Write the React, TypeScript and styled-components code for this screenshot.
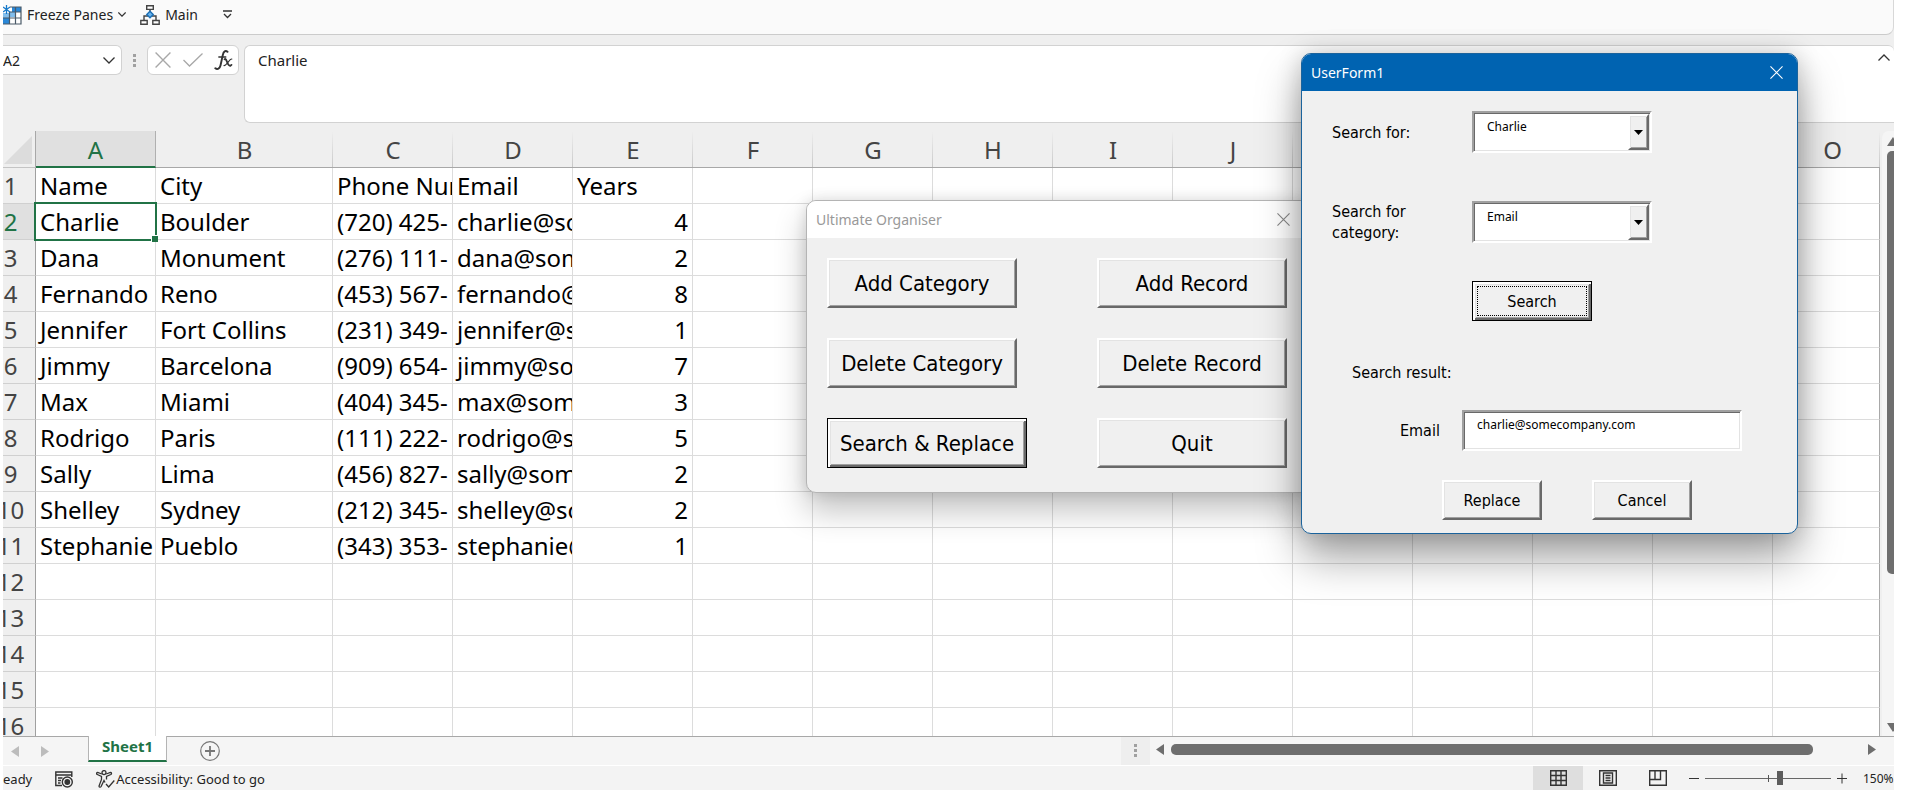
import React from "react";
import styled, { createGlobalStyle, css } from "styled-components";

const uiFont = `"Noto Sans", "Open Sans", sans-serif`;
const formFont = `"DejaVu Sans Condensed", "DejaVu Sans", sans-serif`;
const green = "#217346";

const GlobalStyle = createGlobalStyle`
  * { box-sizing: border-box; }
  body { margin: 0; background: #fff; font-family: ${uiFont}; color: #222; }
  button, input, select { font: inherit; color: inherit; margin: 0; }
`;

const Workbook = styled.main`
  position: relative;
  display: flex;
  flex-direction: column;
  height: 100vh;
  padding: 0 26px 6px 3px;
  overflow: hidden;
`;

/* Quick access bar */
const QuickBarTrack = styled.div`
  background: #efefef;
`;
const QuickBar = styled.header`
  display: flex;
  align-items: center;
  height: 35px;
  padding-bottom: 5px;
  border-bottom: 1px solid #cbcbcb;
  border-right: 1px solid #d8d8d8;
  border-radius: 0 0 8px 0;
  background: #fafafa;
`;
const QuickButton = styled.button`
  display: flex;
  align-items: center;
  gap: 5px;
  padding: 0;
  margin-right: 14px;
  border: 0;
  background: none;
  font-size: 14px;
  line-height: 20px;
`;

/* Formula bar */
const FormulaBar = styled.section`
  display: flex;
  align-items: flex-start;
  padding: 10px 0 8px;
  background: #efefef;
`;
const NameBox = styled.div`
  display: flex;
  align-items: center;
  width: 119px;
  height: 30px;
  padding-right: 6px;
  border: 1px solid #d2d2d2;
  border-left: 0;
  border-radius: 0 6px 6px 0;
  background: #fff;
`;
const NameInput = styled.input`
  flex: 1;
  min-width: 0;
  padding: 0;
  border: 0;
  background: none;
  font-size: 14px;
`;
const IconButton = styled.button`
  display: flex;
  padding: 0;
  border: 0;
  background: none;
`;
const Grip = styled.span`
  display: flex;
  flex-direction: column;
  justify-content: space-between;
  width: 3px;
  height: 13px;
  background: linear-gradient(#a0a0a0, #a0a0a0) center / 3px 3px no-repeat;
  &::before, &::after { content: ""; width: 3px; height: 3px; background: #a0a0a0; }
`;
const BarGrip = styled(Grip)`
  margin: 9px 11px 0 11px;
`;
const EntryButtons = styled.div`
  display: flex;
  align-items: center;
  justify-content: space-between;
  width: 92px;
  height: 30px;
  padding: 0 5px 0 7px;
  border: 1px solid #d2d2d2;
  border-radius: 6px;
  background: #fff;
`;
const FormulaField = styled.div`
  display: flex;
  flex: 1;
  align-items: flex-start;
  justify-content: space-between;
  height: 78px;
  margin-left: 5px;
  padding: 4px 4px 0 13px;
  border: 1px solid #d2d2d2;
  border-right: 0;
  border-radius: 6px 6px 0 6px;
  background: #fff;
`;
const FormulaInput = styled.input`
  flex: 1;
  min-width: 0;
  height: 20px;
  padding: 0;
  border: 0;
  background: none;
  font-size: 15px;
`;
const CollapseButton = styled(IconButton)`
  padding-top: 4px;
`;

/* Sheet */
const SheetArea = styled.section`
  display: flex;
  flex: 1;
  min-height: 0;
  background: #efefef;
`;
const GridView = styled.div`
  flex: 1;
  min-width: 0;
  overflow: hidden;
`;
const Grid = styled.table`
  width: 100%;
  table-layout: fixed;
  border-collapse: separate;
  border-spacing: 0;
`;
const Col = styled.col<{ $w?: number }>`
  ${(p) => p.$w && `width: ${p.$w}px;`}
`;
const Corner = styled.td`
  height: 37px;
  padding: 0 3px 3px 0;
  border-right: 1px solid #a8a8a8;
  border-bottom: 1px solid #c4c4c4;
  text-align: right;
  line-height: 0;
  vertical-align: bottom;
`;
const ColHead = styled.th<{ $on?: boolean }>`
  height: 37px;
  padding: 2px 0 0;
  border-bottom: 1px solid #a8a8a8;
  background: linear-gradient(#efefef, #c8c8c8) right / 1px 100% no-repeat;
  color: #444;
  font-size: 24px;
  font-weight: 400;
  line-height: 32px;
  &:last-child { padding-left: 12px; }
  ${(p) =>
    p.$on &&
    css`
      border-bottom: 2px solid ${green};
      border-right: 1px solid #b0b0b0;
      background: #e0e0e0;
      color: ${green};
    `}
`;
const RowHead = styled.th<{ $on?: boolean }>`
  height: 36px;
  padding: 0;
  border-right: 1px solid #a0a0a0;
  border-bottom: 1px solid #d0d0d0;
  background: ${(p) => (p.$on ? "#e0e0e0" : "#efefef")};
  color: ${(p) => (p.$on ? green : "#444")};
  font-size: 24px;
  font-weight: 400;
  line-height: 35px;
`;
const RowClip = styled.div`
  overflow: hidden;
`;
const RowNumber = styled.span`
  display: flex;
  justify-content: center;
  width: 15px;
`;
const Cell = styled.td<{ $num?: boolean; $on?: boolean }>`
  position: relative;
  height: 36px;
  padding: 0;
  border-right: 1px solid #dcdcdc;
  border-bottom: 1px solid #dcdcdc;
  background: #fff;
  color: #000;
  font-size: 24px;
  line-height: 35px;
  text-align: ${(p) => (p.$num ? "right" : "left")};
  &:last-child { border-right-color: #a8a8a8; }
  ${(p) =>
    p.$on &&
    css`
      z-index: 1;
      &::before {
        content: "";
        position: absolute;
        inset: -2px;
        border: 2px solid ${green};
      }
      &::after {
        content: "";
        position: absolute;
        right: -3px;
        bottom: -3px;
        width: 6px;
        height: 6px;
        border-top: 1px solid #fff;
        border-left: 1px solid #fff;
        background: ${green};
      }
    `}
`;
const CellText = styled.div`
  height: 35px;
  padding: 0 4px;
  overflow: hidden;
  white-space: nowrap;
`;
const VerticalScroll = styled.div`
  display: flex;
  flex-direction: column;
  width: 14px;
  padding: 6px 0 4px 5px;
  border-left: 2px solid #efefef;
  border-radius: 8px 0 0 0;
  background: #f5f5f5;
  overflow: hidden;
`;
const VerticalTrack = styled.div`
  flex: 1;
  margin: 5px 0 8px;
`;
const VerticalThumb = styled.div`
  width: 11px;
  height: 75%;
  border-radius: 5px;
  background: #6e6e6e;
`;

/* Sheet tabs */
const TabBar = styled.nav`
  display: flex;
  align-items: flex-start;
  height: 29px;
  border-top: 1px solid #a8a8a8;
  background: #f5f5f5;
`;
const TabArrows = styled.div`
  display: flex;
  gap: 22px;
  width: 85px;
  padding: 9px 0 0 8px;
`;
const SheetTab = styled.button`
  width: 79px;
  height: 26px;
  margin-top: -1px;
  padding: 0 0 4px;
  border: 1px solid #b4b4b4;
  border-top: 0;
  border-bottom: 2px solid ${green};
  background: #fff;
  color: ${green};
  font-size: 15px;
  font-weight: 700;
  line-height: 20px;
`;
const AddSheet = styled(IconButton)`
  margin: 4px auto 0 33px;
`;
const Splitter = styled.div`
  display: flex;
  justify-content: center;
  width: 29px;
  height: 28px;
  padding-top: 7px;
  background: #eee;
`;
const HorizontalScroll = styled.div`
  display: flex;
  align-items: center;
  width: 726px;
  gap: 7px;
  margin-right: 18px;
  padding-top: 7px;
  padding-left: 6px;
`;
const HorizontalTrack = styled.div`
  flex: 1;
`;
const HorizontalThumb = styled.div`
  width: 93%;
  height: 11px;
  border-radius: 5px;
  background: #6e6e6e;
`;

/* Status bar */
const StatusBar = styled.footer`
  display: flex;
  align-items: center;
  height: 25px;
  border-top: 1px solid #fff;
  background: #f3f3f3;
  font-size: 12px;
  line-height: 20px;
`;
const StatusItem = styled.span`
  display: flex;
  align-items: center;
  gap: 1px;
  margin-right: 23px;
  padding-top: 2px;
  font-size: 13px;
`;
const StatusFill = styled.span`
  flex: 1;
`;
const ViewButton = styled.button<{ $on?: boolean }>`
  display: flex;
  align-items: center;
  justify-content: center;
  width: 50px;
  height: 24px;
  padding: 0;
  border: 0;
  background: ${(p) => (p.$on ? "#dedede" : "none")};
`;
const ZoomSlider = styled.input`
  appearance: none;
  width: 126px;
  height: 16px;
  margin: 0 6px;
  background:
    linear-gradient(#555, #555) 50% 50% / 1px 7px no-repeat,
    linear-gradient(#666, #666) 50% 50% / 100% 1px no-repeat;
  &::-webkit-slider-thumb {
    appearance: none;
    width: 6px;
    height: 14px;
    background: #5c5c5c;
  }
`;
const ZoomValue = styled.span`
  width: 31px;
  margin-left: 16px;
  padding-top: 2px;
  overflow: hidden;
`;

/* Floating windows */
const FormWindow = styled.section<{ $active?: boolean }>`
  position: absolute;
  z-index: 2;
  border: 1px solid ${(p) => (p.$active ? "#1b639c" : "#b4b4b4")};
  border-radius: 10px;
  background: #f0f0f0;
  color: #000;
  font-family: ${formFont};
  overflow: hidden;
  box-shadow: ${(p) =>
    p.$active
      ? "0 24px 44px rgba(0,0,0,.36), 0 0 24px rgba(0,0,0,.18)"
      : "0 18px 32px rgba(0,0,0,.24), 0 0 14px rgba(0,0,0,.12)"};
`;
const OrganiserWindow = styled(FormWindow)`
  left: 806px;
  top: 200px;
  width: 508px;
  height: 293px;
`;
const SearchWindow = styled(FormWindow)`
  left: 1301px;
  top: 53px;
  width: 497px;
  height: 481px;
`;
const TitleBar = styled.header<{ $active?: boolean }>`
  display: flex;
  align-items: center;
  justify-content: space-between;
  height: 37px;
  padding: 0 ${(p) => (p.$active ? 14 : 23)}px 0 9px;
  background: ${(p) => (p.$active ? "#0063b1" : "#fff")};
  color: ${(p) => (p.$active ? "#fff" : "#999")};
  font-family: ${uiFont};
`;
const Title = styled.h2`
  margin: 0;
  font-size: 14px;
  font-weight: 400;
`;
const OrganiserBody = styled.div`
  display: grid;
  grid-template-columns: 200px 190px;
  gap: 30px 70px;
  padding: 20px;
`;
const raised = css`
  border: 2px solid;
  border-color: #fff #696969 #696969 #fff;
  box-shadow: inset 1px 1px #e3e3e3, inset -1px -1px #a0a0a0;
`;
const defaultEdge = css`
  border: 1px solid #000;
  box-shadow: inset 2px 2px #fff, inset -2px -2px #696969, inset 3px 3px #e3e3e3, inset -3px -3px #a0a0a0;
`;
const CommandButton = styled.button<{ $w: number; $large?: boolean; $default?: boolean }>`
  width: ${(p) => p.$w}px;
  height: ${(p) => (p.$large ? 50 : 40)}px;
  padding: 0;
  background: #f0f0f0;
  color: #000;
  font-size: ${(p) => (p.$large ? 22 : 16)}px;
  white-space: nowrap;
  ${(p) => (p.$default ? defaultEdge : raised)}
`;
const FocusFrame = styled.span`
  display: flex;
  align-items: center;
  justify-content: center;
  height: 30px;
  margin: 0 4px;
  border: 1px dotted #000;
`;
const SearchBody = styled.form`
  display: flex;
  flex-direction: column;
  padding: 20px 0 0 30px;
  font-size: 16px;
  line-height: 21px;
`;
const Field = styled.div<{ $label: number; $indent?: number; $after: number }>`
  display: grid;
  grid-template-columns: ${(p) => p.$label}px auto;
  justify-content: start;
  align-items: center;
  margin-left: ${(p) => p.$indent ?? 0}px;
  margin-bottom: ${(p) => p.$after}px;
`;
const FieldLabel = styled.label`
  max-width: 100px;
`;
const sunken = css`
  border: 2px solid;
  border-color: #a0a0a0 #fff #fff #a0a0a0;
  background: #fff;
  box-shadow: inset 1px 1px #696969, inset -1px -1px #e3e3e3;
`;
const Combo = styled.div`
  position: relative;
  width: 180px;
  height: 42px;
  ${sunken}
`;
const ComboSelect = styled.select`
  appearance: none;
  width: 100%;
  height: 100%;
  padding: 0 24px 12px 13px;
  border: 0;
  background: none;
  font-family: ${uiFont};
  font-size: 12px;
`;
const ComboArrow = styled.span`
  position: absolute;
  top: 1px;
  right: 1px;
  display: flex;
  align-items: center;
  justify-content: center;
  width: 21px;
  height: 36px;
  background: #f0f0f0;
  pointer-events: none;
  ${raised}
`;
const ResultInput = styled.input`
  width: 280px;
  height: 41px;
  padding: 0 12px 12px 13px;
  font-family: ${uiFont};
  font-size: 12px;
  ${sunken}
`;
const SearchAction = styled.div`
  margin: 38px 0 41px 140px;
`;
const ResultHeading = styled.p`
  margin: 0 0 27px 20px;
`;
const ActionRow = styled.div`
  display: flex;
  gap: 50px;
  margin-left: 110px;
`;

const Cross = ({ size, color }: { size: number; color: string }) => (
  <svg width={size} height={size} viewBox="0 0 14 14" stroke={color} fill="none" strokeWidth="1.2">
    <path d="M.5 .5l13 13M13.5 .5l-13 13" />
  </svg>
);
const Chevron = ({ w = 12, up = false }: { w?: number; up?: boolean }) => (
  <svg width={w} height={w / 2 + 1} viewBox="0 0 12 7" fill="none" stroke="#333" strokeWidth={w < 10 ? 1.9 : 1.3}>
    <path d={up ? "M.5 6.5L6 1l5.5 5.5" : "M.5 .5L6 6l5.5-5.5"} />
  </svg>
);
const Triangle = ({ dir, color }: { dir: "left" | "right" | "up" | "down"; color: string }) => {
  const paths = { left: "M8 0v11L0 5.5z", right: "M0 0v11l8-5.5z", up: "M0 9L6 0l6 9z", down: "M0 0l6 9 6-9z" };
  const flat = dir === "up" || dir === "down";
  return (
    <svg width={flat ? 12 : 8} height={flat ? 9 : 11} fill={color}>
      <path d={paths[dir]} />
    </svg>
  );
};
const FreezeIcon = () => (
  <svg width="19" height="20" viewBox="0 0 19 20">
    <path d="M5 2h13v17H0V8z" fill="#fff" />
    <path d="M9 2h9v5H9zM0 13h6v6H0z" fill="#2b88d8" />
    <path d="M0 8h6v5H0zM7 7h5v5H7z" fill="#83beec" />
    <path d="M7 2h11v17H0M7 7h11M0 13h18M6.5 7v12M12.5 2v17" fill="none" stroke="#4a5a68" strokeWidth="1.2" />
    <path d="M3.500 0v9M0 2l7 5M7 2L0 7" stroke="#1779c9" strokeWidth="1.3" />
  </svg>
);
const MainIcon = () => (
  <svg width="20" height="20" viewBox="0 0 20 20" fill="#fff" stroke="#444" strokeWidth="1.4">
    <path d="M10 4v4M4 15v-4h4M16 15v-4h-4" fill="none" />
    <path d="M6.7 .8h6.6v3.6H6.7zM.8 15.5h6.4v3.7H.8zM12.8 15.5h6.4v3.7h-6.4z" />
    <path d="M10 6.3l3.200 3.200-3.200 3.200-3.200-3.200z" fill="#69b4ee" stroke="#1c6fb5" />
  </svg>
);
const FxIcon = () => (
  <svg width="19" height="20" viewBox="0 0 19 20" fill="none" stroke="#333" strokeLinecap="round">
    <path d="M13.5 1.8C11.5 .2 9.6 1.3 8.8 5L6.5 15.5C5.8 18.6 3.5 19.8 1.3 18.3" strokeWidth="1.9" />
    <path d="M4.8 7h7" strokeWidth="1.3" />
    <path d="M10.5 9.2c2.5-1.5 2.6 7.3 5.8 6.6l1.2-.9" strokeWidth="1.8" />
    <path d="M17.8 9c-2.5-.4-5 6.8-7.8 6.6" strokeWidth="1.2" />
  </svg>
);
const MacroIcon = () => (
  <svg width="18" height="17" viewBox="0 0 18 17" fill="none" stroke="#333" strokeWidth="1.4">
    <path d="M7 14.5H.8V1h16v5M.8 4h16M3 7h4.5M3 9.5h3M3 12h2.5" />
    <circle cx="12.3" cy="11" r="5" />
    <circle cx="12.3" cy="11" r="2.2" fill="#333" />
  </svg>
);
const AccessIcon = () => (
  <svg width="19" height="18" viewBox="0 0 19 18" fill="none" stroke="#333" strokeWidth="1.3">
    <circle cx="8" cy="2.6" r="2" />
    <path d="M5.8 4L1.7 2.4C.3 2.4 .3 4 1.3 4.5L5.5 6.5v3L3 16c0 1.4 1.5 1.6 2.1 .5L8 10.5l1 2M10.2 4l4.2-1.6c1.4 0 1.4 1.6 .4 2.1l-4.3 2v3M10 14l2.7 3 5.6-6.5" />
  </svg>
);

const rows: [string, string, string, string, string][] = [
  ["Name", "City", "Phone Number", "Email", "Years"],
  ["Charlie", "Boulder", "(720) 425-", "charlie@somecompany.com", "4"],
  ["Dana", "Monument", "(276) 111-", "dana@somecompany.com", "2"],
  ["Fernando", "Reno", "(453) 567-", "fernando@somecompany.com", "8"],
  ["Jennifer", "Fort Collins", "(231) 349-", "jennifer@somecompany.com", "1"],
  ["Jimmy", "Barcelona", "(909) 654-", "jimmy@somecompany.com", "7"],
  ["Max", "Miami", "(404) 345-", "max@somecompany.com", "3"],
  ["Rodrigo", "Paris", "(111) 222-", "rodrigo@somecompany.com", "5"],
  ["Sally", "Lima", "(456) 827-", "sally@somecompany.com", "2"],
  ["Shelley", "Sydney", "(212) 345-", "shelley@somecompany.com", "2"],
  ["Stephanie", "Pueblo", "(343) 353-", "stephanie@somecompany.com", "1"],
];
const columns = "ABCDEFGHIJKLMNO".split("");

function Sheet() {
  return (
    <SheetArea>
      <GridView>
        <Grid>
          <colgroup>
            <Col $w={33} />
            {columns.map((c) => (
              <Col key={c} $w={c === "B" ? 177 : c === "O" ? undefined : 120} />
            ))}
          </colgroup>
          <thead>
            <tr>
              <Corner>
                <svg width="28" height="28" fill="#dcdcdc"><path d="M28 0v28H0z" /></svg>
              </Corner>
              {columns.map((c) => (
                <ColHead key={c} scope="col" $on={c === "A"}>{c}</ColHead>
              ))}
            </tr>
          </thead>
          <tbody>
            {Array.from({ length: 16 }, (_, r) => (
              <tr key={r}>
                <RowHead scope="row" $on={r === 1}>
                  <RowClip><RowNumber>{r + 1}</RowNumber></RowClip>
                </RowHead>
                {columns.map((c, i) => (
                  <Cell key={c} $num={i === 4 && r > 0} $on={r === 1 && i === 0}>
                    {rows[r]?.[i] && <CellText>{rows[r][i]}</CellText>}
                  </Cell>
                ))}
              </tr>
            ))}
          </tbody>
        </Grid>
      </GridView>
      <VerticalScroll>
        <Triangle dir="up" color="#6e6e6e" />
        <VerticalTrack><VerticalThumb /></VerticalTrack>
        <Triangle dir="down" color="#6e6e6e" />
      </VerticalScroll>
    </SheetArea>
  );
}

function Organiser() {
  return (
    <OrganiserWindow aria-label="Ultimate Organiser">
      <TitleBar>
        <Title>Ultimate Organiser</Title>
        <IconButton aria-label="Close organiser"><Cross size={13} color="#888" /></IconButton>
      </TitleBar>
      <OrganiserBody>
        <CommandButton $large $w={190}>Add Category</CommandButton>
        <CommandButton $large $w={190}>Add Record</CommandButton>
        <CommandButton $large $w={190}>Delete Category</CommandButton>
        <CommandButton $large $w={190}>Delete Record</CommandButton>
        <CommandButton $large $w={200} $default>Search &amp; Replace</CommandButton>
        <CommandButton $large $w={190}>Quit</CommandButton>
      </OrganiserBody>
    </OrganiserWindow>
  );
}

function ComboBox({ id, value }: { id: string; value: string }) {
  return (
    <Combo>
      <ComboSelect id={id} defaultValue={value}>
        <option>{value}</option>
      </ComboSelect>
      <ComboArrow>
        <svg width="9" height="5"><path d="M0 0h9L4.5 5z" /></svg>
      </ComboArrow>
    </Combo>
  );
}

function SearchForm() {
  return (
    <SearchWindow $active aria-label="UserForm1">
      <TitleBar $active>
        <Title>UserForm1</Title>
        <IconButton aria-label="Close form"><Cross size={13} color="#fff" /></IconButton>
      </TitleBar>
      <SearchBody onSubmit={(e) => e.preventDefault()}>
        <Field $label={140} $after={48}>
          <FieldLabel htmlFor="term">Search for:</FieldLabel>
          <ComboBox id="term" value="Charlie" />
        </Field>
        <Field $label={140} $after={0}>
          <FieldLabel htmlFor="category">Search for category:</FieldLabel>
          <ComboBox id="category" value="Email" />
        </Field>
        <SearchAction>
          <CommandButton $w={120} $default><FocusFrame>Search</FocusFrame></CommandButton>
        </SearchAction>
        <ResultHeading>Search result:</ResultHeading>
        <Field $label={62} $indent={68} $after={29}>
          <FieldLabel htmlFor="result">Email</FieldLabel>
          <ResultInput id="result" defaultValue="charlie@somecompany.com" />
        </Field>
        <ActionRow>
          <CommandButton type="button" $w={100}>Replace</CommandButton>
          <CommandButton type="button" $w={100}>Cancel</CommandButton>
        </ActionRow>
      </SearchBody>
    </SearchWindow>
  );
}

export default function App() {
  return (
    <>
      <GlobalStyle />
      <Workbook>
        <QuickBarTrack>
          <QuickBar>
            <QuickButton><FreezeIcon />Freeze Panes<Chevron w={8} /></QuickButton>
            <QuickButton><MainIcon />Main</QuickButton>
            <IconButton aria-label="Customize toolbar">
              <svg width="22" height="9" viewBox="0 0 22 9" fill="none" stroke="#333" strokeWidth="1.3">
                <path d="M11 1h9M12 4l3.5 3.5L19 4" />
              </svg>
            </IconButton>
          </QuickBar>
        </QuickBarTrack>
        <FormulaBar>
          <NameBox>
            <NameInput aria-label="Name box" defaultValue="A2" />
            <Chevron />
          </NameBox>
          <BarGrip />
          <EntryButtons>
            <IconButton aria-label="Cancel entry"><Cross size={16} color="#a8a8a8" /></IconButton>
            <IconButton aria-label="Accept entry">
              <svg width="20" height="14" fill="none" stroke="#a8a8a8" strokeWidth="1.3"><path d="M.5 7l6 6 13-12.5" /></svg>
            </IconButton>
            <IconButton aria-label="Insert function"><FxIcon /></IconButton>
          </EntryButtons>
          <FormulaField>
            <FormulaInput aria-label="Formula" defaultValue="Charlie" />
            <CollapseButton aria-label="Collapse formula bar"><Chevron up /></CollapseButton>
          </FormulaField>
        </FormulaBar>
        <Sheet />
        <TabBar>
          <TabArrows>
            <Triangle dir="left" color="#bcbcbc" />
            <Triangle dir="right" color="#bcbcbc" />
          </TabArrows>
          <SheetTab>Sheet1</SheetTab>
          <AddSheet aria-label="New sheet">
            <svg width="20" height="20" fill="none" stroke="#777" strokeWidth="1.2">
              <circle cx="10" cy="10" r="9.3" />
              <path d="M5 10h10M10 5v10" strokeWidth="1.8" />
            </svg>
          </AddSheet>
          <Splitter><Grip /></Splitter>
          <HorizontalScroll>
            <Triangle dir="left" color="#6e6e6e" />
            <HorizontalTrack><HorizontalThumb /></HorizontalTrack>
            <Triangle dir="right" color="#6e6e6e" />
          </HorizontalScroll>
        </TabBar>
        <StatusBar>
          <StatusItem>eady</StatusItem>
          <StatusItem><MacroIcon /></StatusItem>
          <StatusItem><AccessIcon />Accessibility: Good to go</StatusItem>
          <StatusFill />
          <ViewButton $on aria-label="Normal view">
            <svg width="17" height="16" fill="none" stroke="#333" strokeWidth="1.4"><path d="M.7 .7h15.6v14.6H.7zM.7 5.5h15.6M.7 10.5h15.6M6 .7v14.6M11 .7v14.6" /></svg>
          </ViewButton>
          <ViewButton aria-label="Page layout view">
            <svg width="18" height="16" fill="none" stroke="#333" strokeWidth="1.4"><path d="M.7 .7h16.6v14.6H.7zM4.5 3h9v10h-9zM6.5 5.5h5M6.5 8h5M6.5 10.5h5" /></svg>
          </ViewButton>
          <ViewButton aria-label="Page break view">
            <svg width="18" height="16" fill="none" stroke="#333" strokeWidth="1.4"><path d="M.7 .7h16.6v14.6H.7zM.7 9.5h10.8V.7M6 .7v8.8" /></svg>
          </ViewButton>
          <IconButton aria-label="Zoom out">
            <svg width="16" height="11" stroke="#333"><path d="M6 5.5h10" /></svg>
          </IconButton>
          <ZoomSlider type="range" min="0" max="100" defaultValue="60" aria-label="Zoom" />
          <IconButton aria-label="Zoom in">
            <svg width="10" height="11" stroke="#333"><path d="M0 5.5h10M5 .5v10" /></svg>
          </IconButton>
          <ZoomValue>150%</ZoomValue>
        </StatusBar>
        <Organiser />
        <SearchForm />
      </Workbook>
    </>
  );
}
